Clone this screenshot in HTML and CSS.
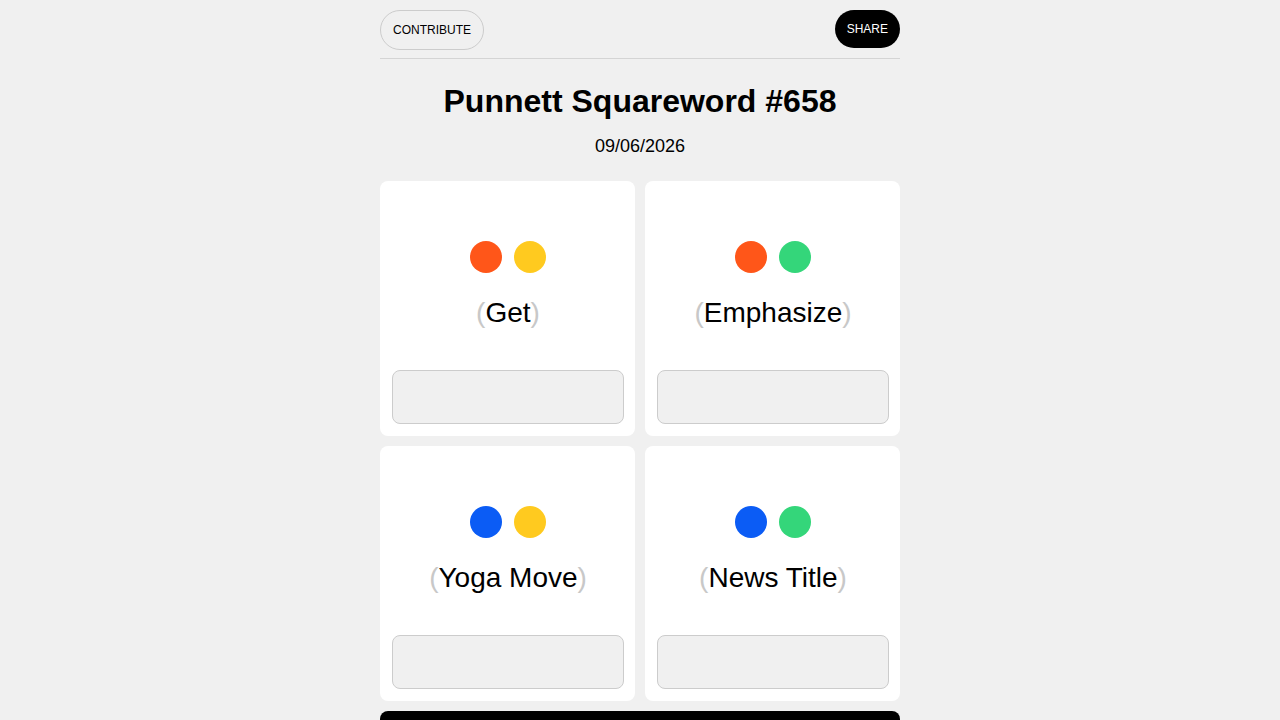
FILE: index.html
```html
<!DOCTYPE html>
<html>
<head>
<meta charset="utf-8">
<link rel="stylesheet" href="styles.css">
</head>
<body>
<div class="page">
  <header class="topbar">
    <button class="btn btn-outline">CONTRIBUTE</button>
    <button class="btn btn-dark">SHARE</button>
  </header>
  <h1 class="title">Punnett Squareword #658</h1>
  <div class="date">09/06/2026</div>
  <main class="grid">
    <div class="card">
      <div class="card-top">
        <div class="dots"><span class="dot orange"></span><span class="dot yellow"></span></div>
        <div class="clue"><span class="paren">(</span>Get<span class="paren">)</span></div>
      </div>
      <div class="answer"></div>
    </div>
    <div class="card">
      <div class="card-top">
        <div class="dots"><span class="dot orange"></span><span class="dot green"></span></div>
        <div class="clue"><span class="paren">(</span>Emphasize<span class="paren">)</span></div>
      </div>
      <div class="answer"></div>
    </div>
    <div class="card">
      <div class="card-top">
        <div class="dots"><span class="dot blue"></span><span class="dot yellow"></span></div>
        <div class="clue"><span class="paren">(</span>Yoga Move<span class="paren">)</span></div>
      </div>
      <div class="answer"></div>
    </div>
    <div class="card">
      <div class="card-top">
        <div class="dots"><span class="dot blue"></span><span class="dot green"></span></div>
        <div class="clue"><span class="paren">(</span>News Title<span class="paren">)</span></div>
      </div>
      <div class="answer"></div>
    </div>
  </main>
  <div class="submit"></div>
</div>
</body>
</html>
```
FILE: styles.css
```css
html, body {
  margin: 0;
  padding: 0;
  background: #f0f0f0;
  font-family: "Liberation Sans", Arial, sans-serif;
  color: #000;
  overflow: hidden;
}
.page {
  width: 520px;
  margin: 0 auto;
  padding-top: 10px;
}
.topbar {
  display: flex;
  justify-content: space-between;
  align-items: flex-start;
  padding-bottom: 8px;
  border-bottom: 1px solid #d4d4d4;
}
.btn {
  font-family: "Liberation Sans", Arial, sans-serif;
  font-size: 12px;
  border-radius: 20px;
  cursor: pointer;
}
.btn-outline {
  height: 40px;
  padding: 0 12px;
  background: transparent;
  border: 1px solid #cccccc;
  color: #000;
}
.btn-dark {
  height: 38px;
  padding: 0 12px;
  background: #000;
  border: none;
  color: #fff;
}
.title {
  margin: 23px 0 0;
  text-align: center;
  font-size: 32px;
  line-height: 38px;
  font-weight: bold;
}
.date {
  margin-top: 15px;
  text-align: center;
  font-size: 18px;
  line-height: 22px;
}
.grid {
  margin-top: 24px;
  display: grid;
  grid-template-columns: 1fr 1fr;
  gap: 10px;
}
.card {
  height: 255px;
  box-sizing: border-box;
  background: #fff;
  border-radius: 8px;
  padding: 12px 11px 12px 12px;
  display: flex;
  flex-direction: column;
}
.card-top {
  flex: 1;
  display: flex;
  flex-direction: column;
  align-items: center;
  padding-top: 48px;
}
.dots {
  display: flex;
  gap: 12px;
}
.dot {
  width: 32px;
  height: 32px;
  border-radius: 50%;
  display: block;
}
.orange { background: #ff5619; }
.yellow { background: #ffca1f; }
.blue { background: #0b5cf5; }
.green { background: #34d67a; }
.clue {
  margin-top: 24px;
  font-size: 28px;
  line-height: 32px;
}
.paren { color: #c8c8c8; }
.answer {
  height: 54px;
  box-sizing: border-box;
  background: #f0f0f0;
  border: 1px solid #cccccc;
  border-radius: 8px;
}
.submit {
  margin-top: 10px;
  height: 50px;
  background: #000;
  border-radius: 8px;
}
```
